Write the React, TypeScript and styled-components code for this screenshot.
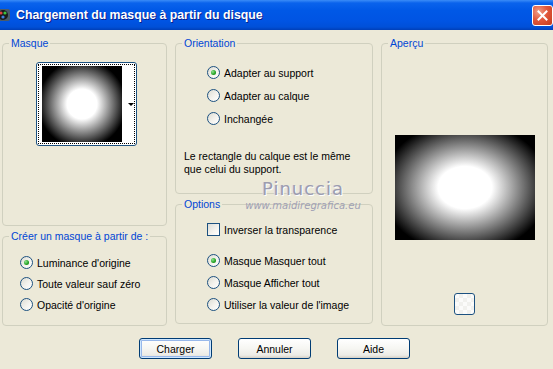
import React from "react";
import styled, { createGlobalStyle } from "styled-components";

const GlobalStyle = createGlobalStyle`
  html, body {
    margin: 0;
    padding: 0;
    background: #ece9d8;
  }
  body {
    font-family: "Liberation Sans", Arial, sans-serif;
    font-size: 10.5px;
    color: #000;
  }
`;

const Window = styled.div`
  position: relative;
  width: 553px;
  height: 369px;
  overflow: hidden;
  background: #ece9d8;
`;

// Barre de titre XP
const TitleBar = styled.div`
  height: 30px;
  display: flex;
  align-items: center;
  background: linear-gradient(
    to bottom,
    #3b8cf7 0%,
    #0a63ec 10%,
    #0058e6 35%,
    #0054e3 70%,
    #0050d8 90%,
    #003fb8 100%
  );
`;

const AppIcon = styled.svg`
  margin-left: -5px;
  flex-shrink: 0;
`;

const TitleText = styled.span`
  margin-left: 5px;
  color: #fff;
  font-weight: bold;
  font-size: 12.3px;
  text-shadow: 1px 1px 0 #0a1e8a;
  white-space: nowrap;
`;

const CloseButton = styled.div`
  margin-left: auto;
  width: 21px;
  height: 21px;
  box-sizing: border-box;
  border: 1px solid #fff;
  border-radius: 3px;
  background: radial-gradient(circle at 30% 30%, #f0a08a 0%, #e2583c 45%, #c23a1c 100%);
  display: flex;
  align-items: center;
  justify-content: center;
`;

const Body = styled.div`
  display: grid;
  grid-template-columns: 165px 198px 167px;
  column-gap: 8px;
  padding: 7px 0 0 2px;
`;

const Column = styled.div`
  display: flex;
  flex-direction: column;
  gap: 4px;
`;

const Group = styled.fieldset<{ $h: number }>`
  box-sizing: border-box;
  height: ${(p) => p.$h}px;
  margin: 0;
  padding: 0;
  min-width: 0;
  border: 1px solid #d0d0bf;
  border-radius: 4px;
  display: flex;
  flex-direction: column;
`;

const Legend = styled.legend`
  color: #0046d5;
  padding: 0 2px;
  margin-left: 6px;
  line-height: 13px;
  font-size: 10.5px;
`;

const MaskThumb = styled.div`
  margin: 12px 0 0 33px;
  width: 101px;
  height: 84px;
  box-sizing: border-box;
  border: 1px solid #1c5180;
  border-radius: 3px;
  background: #fff;
  padding: 1px;
`;

const FocusRect = styled.div`
  height: 100%;
  box-sizing: border-box;
  border: 1px dotted #000;
  display: flex;
  padding: 1px 0 1px 3px;
`;

const MaskImage = styled.div`
  width: 80px;
  height: 100%;
  background: radial-gradient(circle 44px at 50% 50%, #fff 0%, #fff 34%, #000 100%);
`;

const DropStrip = styled.div`
  flex: 1;
  display: flex;
  align-items: center;
  justify-content: flex-end;
  padding-right: 0;
  &::after {
    content: "";
    border-left: 3px solid transparent;
    border-right: 3px solid transparent;
    border-top: 3px solid #000;
  }
`;

const OptionList = styled.div<{ $top: number; $left: number; $gap: number }>`
  display: flex;
  flex-direction: column;
  gap: ${(p) => p.$gap}px;
  margin: ${(p) => p.$top}px 0 0 ${(p) => p.$left}px;
`;

const Option = styled.label`
  display: flex;
  align-items: center;
  gap: 4px;
  height: 13px;
  white-space: nowrap;
`;

const Radio = styled.span<{ $checked?: boolean }>`
  width: 13px;
  height: 13px;
  box-sizing: border-box;
  border: 1px solid #1c5180;
  border-radius: 50%;
  background: linear-gradient(135deg, #dcdcd3 0%, #f4f3ee 55%, #fff 100%);
  display: flex;
  align-items: center;
  justify-content: center;
  flex-shrink: 0;
  &::after {
    content: "";
    display: ${(p) => (p.$checked ? "block" : "none")};
    width: 5px;
    height: 5px;
    border-radius: 50%;
    background: radial-gradient(circle at 35% 35%, #8ee38e 0%, #21a121 60%, #137013 100%);
  }
`;

const CheckBox = styled.span`
  width: 13px;
  height: 13px;
  box-sizing: border-box;
  border: 1px solid #1c5180;
  background: linear-gradient(135deg, #dcdcd7 0%, #f5f4ef 60%, #fff 100%);
  flex-shrink: 0;
`;

const Note = styled.p`
  margin: 25px 0 0 8px;
  line-height: 13px;
`;

const Preview = styled.div`
  align-self: center;
  margin-top: 85px;
  width: 140px;
  height: 105px;
  background: radial-gradient(ellipse 84px 66px at 50% 50%, #fff 0%, #fff 32%, #000 100%);
`;

const SmallButton = styled.div`
  align-self: center;
  margin-top: 53px;
  width: 21px;
  height: 22px;
  box-sizing: border-box;
  border: 1px solid #1c5180;
  border-radius: 3px;
  background-color: #fbfbfa;
  background-image: linear-gradient(45deg, #f1f1ee 25%, transparent 25%, transparent 75%, #f1f1ee 75%),
    linear-gradient(45deg, #f1f1ee 25%, transparent 25%, transparent 75%, #f1f1ee 75%);
  background-size: 8px 8px;
  background-position: 0 0, 4px 4px;
`;

const ButtonRow = styled.div`
  display: flex;
  justify-content: center;
  gap: 26px;
  padding: 12px 4px 0 0;
`;

const Button = styled.button<{ $default?: boolean }>`
  width: 73px;
  height: 21px;
  box-sizing: border-box;
  border: 1px solid #003c74;
  border-radius: 3px;
  background: linear-gradient(to bottom, #ffffff 0%, #f6f6f2 50%, #ecebe6 85%, #d6d0c5 100%);
  font-family: "Liberation Sans", Arial, sans-serif;
  font-size: 10.5px;
  color: #000;
  padding: 0;
  box-shadow: ${(p) =>
    p.$default ? "inset 0 0 0 1px #cee7ff, inset 0 0 0 2px #98b8ea" : "none"};
`;

const Watermark = styled.div`
  position: absolute;
  left: 242px;
  top: 178px;
  width: 122px;
  text-align: center;
  pointer-events: none;
`;

const WatermarkName = styled.div`
  font-family: "DejaVu Sans", sans-serif;
  font-size: 18px;
  letter-spacing: 1px;
  color: #9c9cae;
  text-shadow: 1px 1px 0 #fff, -1px 0 0 #d8d8e4;
  line-height: 21px;
`;

const WatermarkUrl = styled.div`
  font-family: "DejaVu Sans", sans-serif;
  font-style: italic;
  font-size: 10px;
  color: #a0a0b4;
  line-height: 12px;
  margin-top: 1px;
`;

export default function App() {
  return (
    <Window>
      <GlobalStyle />
      <TitleBar>
        <AppIcon width="16" height="16" viewBox="0 0 16 16">
          <rect x="1" y="2" width="14" height="12" rx="2" fill="#4a5a6a" />
          <circle cx="8" cy="8" r="5" fill="#1a1a1a" />
          <circle cx="6" cy="6" r="1.6" fill="#e04040" />
          <circle cx="10" cy="6" r="1.6" fill="#40c040" />
          <circle cx="8" cy="10" r="1.6" fill="#4080e0" />
        </AppIcon>
        <TitleText>Chargement du masque à partir du disque</TitleText>
        <CloseButton>
          <svg width="11" height="11" viewBox="0 0 11 11">
            <path d="M1.5 1.5 L9.5 9.5 M9.5 1.5 L1.5 9.5" stroke="#fff" strokeWidth="2" strokeLinecap="square" />
          </svg>
        </CloseButton>
      </TitleBar>

      <Body>
        <Column>
          <Group $h={189}>
            <Legend>Masque</Legend>
            <MaskThumb>
              <FocusRect>
                <MaskImage />
                <DropStrip />
              </FocusRect>
            </MaskThumb>
          </Group>
          <Group $h={96}>
            <Legend>Créer un masque à partir de :</Legend>
            <OptionList $top={13} $left={17} $gap={8}>
              <Option><Radio $checked />Luminance d'origine</Option>
              <Option><Radio />Toute valeur sauf zéro</Option>
              <Option><Radio />Opacité d'origine</Option>
            </OptionList>
          </Group>
        </Column>

        <Column>
          <Group $h={157}>
            <Legend>Orientation</Legend>
            <OptionList $top={16} $left={31} $gap={10}>
              <Option><Radio $checked />Adapter au support</Option>
              <Option><Radio />Adapter au calque</Option>
              <Option><Radio />Inchangée</Option>
            </OptionList>
            <Note>
              Le rectangle du calque est le même
              <br />
              que celui du support.
            </Note>
          </Group>
          <Group $h={126}>
            <Legend>Options</Legend>
            <OptionList $top={12} $left={31} $gap={18}>
              <Option><CheckBox />Inverser la transparence</Option>
            </OptionList>
            <OptionList $top={18} $left={31} $gap={9}>
              <Option><Radio $checked />Masque Masquer tout</Option>
              <Option><Radio />Masque Afficher tout</Option>
              <Option><Radio />Utiliser la valeur de l'image</Option>
            </OptionList>
          </Group>
        </Column>

        <Column>
          <Group $h={289}>
            <Legend>Aperçu</Legend>
            <Preview />
            <SmallButton />
          </Group>
        </Column>
      </Body>

      <ButtonRow>
        <Button $default>Charger</Button>
        <Button>Annuler</Button>
        <Button>Aide</Button>
      </ButtonRow>

      <Watermark>
        <WatermarkName>Pinuccia</WatermarkName>
        <WatermarkUrl>www.maidiregrafica.eu</WatermarkUrl>
      </Watermark>
    </Window>
  );
}
